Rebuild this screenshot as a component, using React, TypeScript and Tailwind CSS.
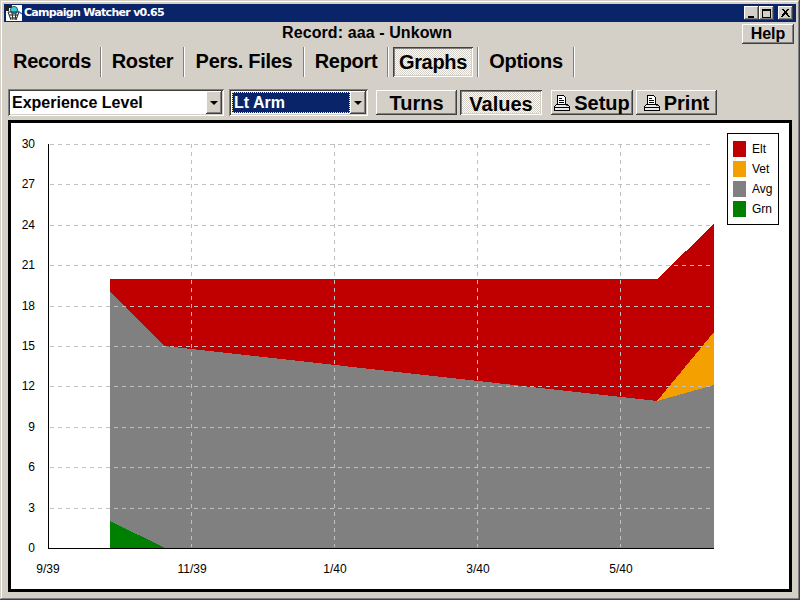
const raised = 'shadow-[inset_-1px_-1px_#404040,inset_1px_1px_#ffffff,inset_-2px_-2px_#808080,inset_2px_2px_#d4d0c8]';
const pressed = 'shadow-[inset_1px_1px_#404040,inset_-1px_-1px_#ffffff,inset_2px_2px_#808080,inset_-2px_-2px_#d4d0c8]';
const checker = 'bg-[repeating-conic-gradient(#ffffff_0_25%,#d4d0c8_0_50%)] bg-[length:2px_2px]';

const PrinterIcon = () => (
  <svg width="16" height="16" viewBox="0 0 16 16" shapeRendering="crispEdges" className="shrink-0">
    <path d="M3.5 0.5h6l2 2v7h-8z" fill="#fff" stroke="#000" />
    <path d="M5 3.5h3M5 5.5h5M5 7.5h5" stroke="#000" />
    <path d="M2.5 9.5h11l2 2v4h-15v-4z" fill="#e8e8e8" stroke="#000" />
    <path d="M1 12.5h14" stroke="#000" />
    <rect x="12" y="10" width="2" height="1" fill="#f00" />
  </svg>
);

const AppIcon = () => (
  <svg width="16" height="16" viewBox="0 0 16 16" className="shrink-0">
    <rect width="16" height="16" fill="#fff" />
    <path d="M0 0h6v3H3v3H0z" fill="#202020" />
    <circle cx="8" cy="5" r="3.6" fill="#30d0d8" stroke="#303030" strokeWidth="0.8" />
    <path d="M2 7h11M3 10h9M4 13h7M2 7l3 8M6 8l1 7M10 8l-1 7M13 7l-3 8" stroke="#222" strokeWidth="1" fill="none" />
    <path d="M12 6l4 3" stroke="#2060e0" strokeWidth="1.2" />
  </svg>
);

const WinButton = ({children}: {children: React.ReactNode}) => (
  <div className={`flex h-[14px] w-[15px] items-center justify-center bg-[#d4d0c8] ${raised}`}>{children}</div>
);

const TitleBar = () => (
  <div className="flex h-[18px] items-center bg-[#0a246a] pl-[2px] pr-[3px]">
    <AppIcon />
    <span className="ml-[2px] font-['DejaVu_Sans'] text-[11px] font-bold tracking-[-0.7px] text-white">Campaign Watcher v0.65</span>
    <div className="ml-auto flex">
      <WinButton>
        <div className="mt-[7px] mr-[2px] h-[2px] w-[6px] bg-black" />
      </WinButton>
      <WinButton>
        <div className="h-[9px] w-[9px] border border-t-2 border-black" />
      </WinButton>
      <div className="ml-[4px]">
        <WinButton>
          <svg width="9" height="8" viewBox="0 0 9 8" shapeRendering="crispEdges">
            <path d="M1 0l7 8M8 0l-7 8M2 0l7 8M7 0l-7 8" stroke="#000" strokeWidth="1" />
          </svg>
        </WinButton>
      </div>
    </div>
  </div>
);

const MENU = [
  {label: 'Records', width: 'w-[98px]'},
  {label: 'Roster', width: 'w-[83px]'},
  {label: 'Pers. Files', width: 'w-[120px]'},
  {label: 'Report', width: 'w-[84px]'},
  {label: 'Graphs', width: 'w-[90px]', active: true},
  {label: 'Options', width: 'w-[96px]'},
];

const MenuBar = () => (
  <div className="flex h-[30px] font-['Liberation_Sans',sans-serif] text-xl font-bold tracking-[-0.3px] text-black">
    {MENU.map(item => (
      <div key={item.label} className={`flex h-full ${item.width}`}>
        <div className="flex min-w-0 flex-1 justify-center px-[4px]">
          {item.active ? (
            <div className={`flex h-full w-full items-center justify-center ${checker} ${pressed}`}>{item.label}</div>
          ) : (
            <div className="flex h-full items-center pb-[2px]">{item.label}</div>
          )}
        </div>
        <div className="h-full w-[2px] border-l border-[#808080] bg-white" />
      </div>
    ))}
  </div>
);

const Combo = ({label, width, focused}: {label: string; width: string; focused?: boolean}) => (
  <div className={`flex h-[27px] items-center bg-white p-[2px] shadow-[inset_1px_1px_#808080,inset_-1px_-1px_#ffffff,inset_2px_2px_#404040,inset_-2px_-2px_#d4d0c8] ${width}`}>
    <div className={`ml-[1px] flex h-[21px] min-w-0 flex-1 items-center pl-[1px] font-['Liberation_Sans',sans-serif] text-base font-bold ${focused ? 'border border-dotted border-[#f0e4b0] bg-[#0a246a] text-white' : 'text-black'}`}>
      {label}
    </div>
    <div className={`flex h-[23px] w-[16px] items-center justify-center bg-[#d4d0c8] ${raised}`}>
      <div className="h-0 w-0 border-x-[4px] border-t-[4px] border-x-transparent border-t-black" />
    </div>
  </div>
);

const ToolButton = ({label, width, active, icon}: {label: string; width: string; active?: boolean; icon?: boolean}) => (
  <div className={`flex h-[25px] items-center justify-center gap-[4px] font-['Liberation_Sans',sans-serif] text-xl font-bold text-black ${width} ${active ? `${checker} ${pressed}` : `bg-[#d4d0c8] ${raised}`}`}>
    {icon && <PrinterIcon />}
    <span className={active ? 'mt-[2px]' : ''}>{label}</span>
  </div>
);

const Toolbar = () => (
  <div className="mt-[12px] flex h-[27px] items-center pl-[4px]">
    <Combo label="Experience Level" width="w-[216px]" />
    <div className="ml-[5px]">
      <Combo label="Lt Arm" width="w-[139px]" focused />
    </div>
    <div className="ml-[8px]">
      <ToolButton label="Turns" width="w-[81px]" />
    </div>
    <div className="ml-[3px]">
      <ToolButton label="Values" width="w-[82px]" active />
    </div>
    <div className="ml-[9px]">
      <ToolButton label="Setup" width="w-[82px]" icon />
    </div>
    <div className="ml-[3px]">
      <ToolButton label="Print" width="w-[81px]" icon />
    </div>
  </div>
);

const Y_TICKS = [30, 27, 24, 21, 18, 15, 12, 9, 6, 3, 0];
const X_TICKS = [
  {x: 48, label: '9/39'},
  {x: 192, label: '11/39'},
  {x: 335, label: '1/40'},
  {x: 478, label: '3/40'},
  {x: 621, label: '5/40'},
];
const yOf = (value: number) => Math.round(548 - value * 13.467);

const Chart = () => (
  <svg viewBox="11 123 778 466" width="778" height="466" className="block">
    <g shapeRendering="crispEdges">
      <polygon points="110,279 657,279 714,224 714,548 110,548" fill="#c00000" />
      <polygon points="657,401 714,332 714,386 657,402" fill="#f4a000" />
      <polygon points="110,292 165,346 657,401 714,385 714,548 110,548" fill="#808080" />
      <polygon points="110,521 165,548 110,548" fill="#008000" />
      {Y_TICKS.filter(value => value > 0).map(value => (
        <line key={value} x1="50" x2="714" y1={yOf(value) + 0.5} y2={yOf(value) + 0.5} stroke="#c0c0c0" strokeDasharray="4 4" />
      ))}
      {X_TICKS.slice(1).map(tick => (
        <line key={tick.x} x1={tick.x - 0.5} x2={tick.x - 0.5} y1="144" y2="547" stroke="#c0c0c0" strokeDasharray="4 4" />
      ))}
      <path d="M48.5 144V548.5H714" fill="none" stroke="#000" strokeWidth="1" />
    </g>
    <g fontFamily="'Liberation Sans', sans-serif" fontSize="12" fill="#000">
      {Y_TICKS.map(value => (
        <text key={value} x="35" y={yOf(value) + 4} textAnchor="end">{value}</text>
      ))}
      {X_TICKS.map(tick => (
        <text key={tick.x} x={tick.x} y="573" textAnchor="middle">{tick.label}</text>
      ))}
    </g>
  </svg>
);

const LEGEND = [
  {label: 'Elt', color: 'bg-[#c00000]'},
  {label: 'Vet', color: 'bg-[#f4a000]'},
  {label: 'Avg', color: 'bg-[#808080]'},
  {label: 'Grn', color: 'bg-[#008000]'},
];

const Legend = () => (
  <div className="absolute top-[10px] left-[716px] flex h-[92px] w-[52px] flex-col gap-[4px] border border-black bg-white pt-[7px] pl-[5px]">
    {LEGEND.map(item => (
      <div key={item.label} className="flex h-[16px] items-center gap-[6px] font-['Liberation_Sans',sans-serif] text-xs text-black">
        <div className={`h-[16px] w-[13px] ${item.color}`} />
        {item.label}
      </div>
    ))}
  </div>
);

const App = () => {
  return (
    <div className="flex h-[600px] w-[800px] flex-col overflow-hidden bg-[#d4d0c8] p-[4px] shadow-[inset_-1px_-1px_#404040,inset_1px_1px_#d4d0c8,inset_-2px_-2px_#808080,inset_2px_2px_#ffffff]">
      <TitleBar />
      <div className="flex h-[25px] items-start">
        <div className="mt-[-1px] ml-[278px] font-['Liberation_Sans',sans-serif] text-base font-bold tracking-[0.1px] text-black">Record: aaa - Unkown</div>
        <div className={`mt-[2px] mr-[2px] ml-auto flex h-[20px] w-[52px] items-center justify-center bg-[#d4d0c8] font-['Liberation_Sans',sans-serif] text-base font-bold text-black ${raised}`}>Help</div>
      </div>
      <MenuBar />
      <Toolbar />
      <div className="relative mt-[4px] ml-[4px] h-[472px] w-[784px] border-[3px] border-black bg-white">
        <Chart />
        <Legend />
      </div>
    </div>
  );
};

export default App;
